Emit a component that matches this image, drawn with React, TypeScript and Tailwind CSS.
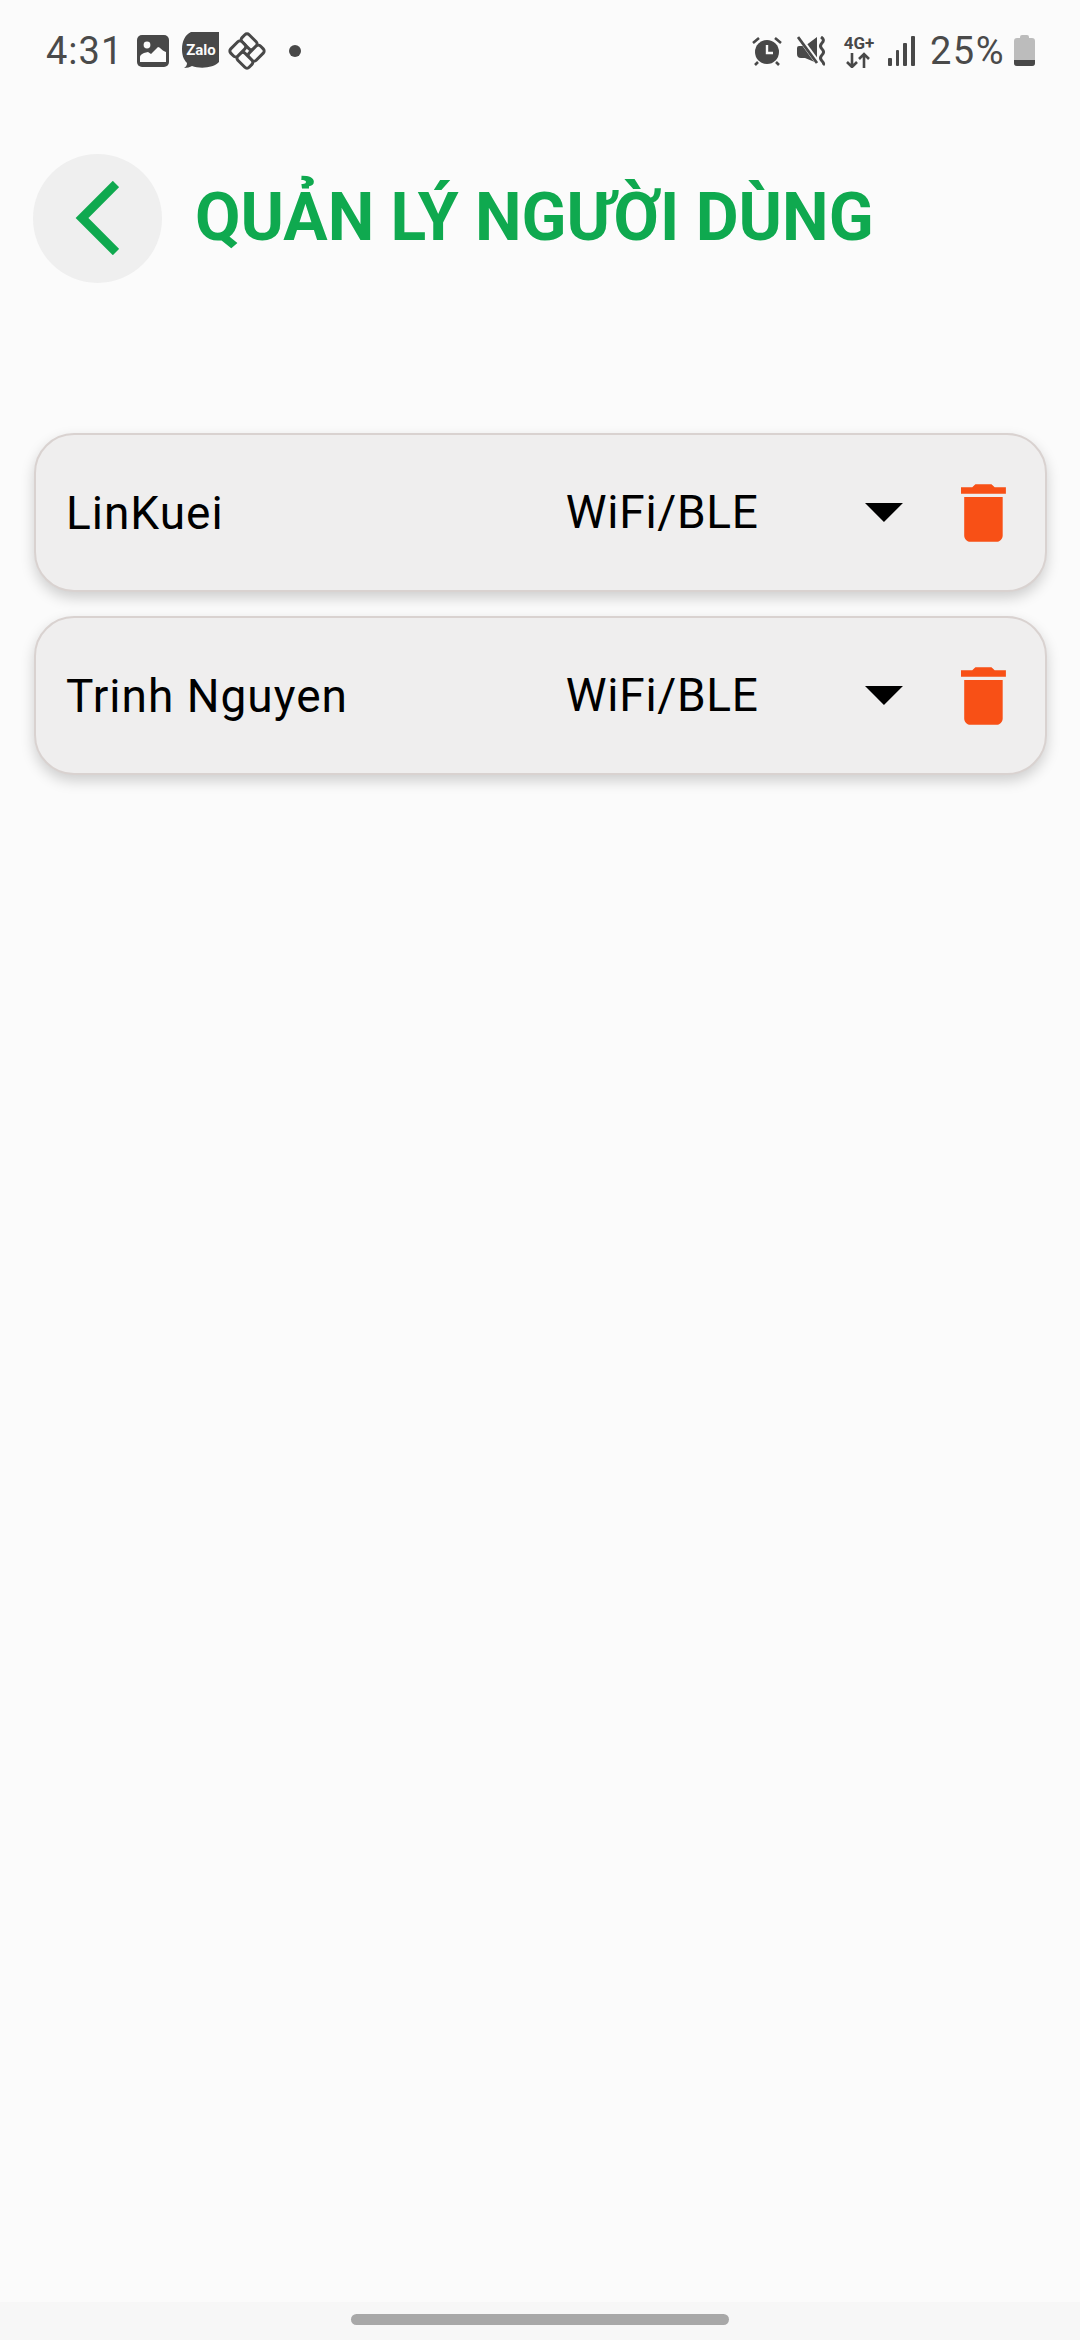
const users = ['LinKuei', 'Trinh Nguyen']

function StatusLeft() {
  return (
    <div className="flex items-center">
      <span className="text-[38px] leading-none text-[#4a4a4a] w-[91px] tracking-[1px]">4:31</span>
      <svg width="32" height="32" viewBox="0 0 32 32" className="mr-[13px]">
        <rect width="32" height="32" rx="5" fill="#484848" />
        <circle cx="10" cy="10" r="3.4" fill="#fbfbfb" />
        <path d="M3 27v-5c0-1 1-3 4-4l4-1 3 2 7-7c2 0 3 3 8 5v10z" fill="#fbfbfb" />
      </svg>
      <svg width="37" height="37" viewBox="0 0 37 37" className="mr-[9px]">
        <path d="M9 0h28v30c-5 6-19 7-27 4-2 1-5 2-8 2 2-1 3-3 3-5C1 27 0 22 0 17 0 9 3 3 9 0z" fill="#484848" />
        <text x="19" y="23" textAnchor="middle" fontSize="15" fontWeight="700" fill="#fbfbfb" fontFamily="Roboto, sans-serif">Zalo</text>
      </svg>
      <svg width="38" height="38" viewBox="-19 -19 38 38" className="mr-[23px]">
        <g transform="rotate(45)" fill="#fbfbfb" stroke="#484848" strokeWidth="3">
          <rect x="-13" y="-13" width="16" height="10" rx="3" />
          <rect x="3" y="-13" width="10" height="16" rx="3" />
          <rect x="-3" y="3" width="16" height="10" rx="3" />
          <rect x="-13" y="-3" width="10" height="16" rx="3" />
        </g>
      </svg>
      <div className="w-3 h-3 rounded-full bg-[#484848]" />
    </div>
  )
}

function StatusRight() {
  return (
    <div className="flex items-center">
      <svg width="30" height="30" viewBox="0 0 30 30" className="mr-[15px]">
        <circle cx="15" cy="16" r="12" fill="#484848" />
        <path d="M15 9v8h6" fill="none" stroke="#fbfbfb" strokeWidth="2.4" />
        <path d="M1 7l6-5M29 7l-6-5M6 26l-3 3M24 26l3 3" stroke="#484848" strokeWidth="2.6" />
      </svg>
      <svg width="30" height="30" viewBox="0 0 30 30" className="mr-[15px]">
        <path d="M0 12a2 2 0 0 1 2-2h6L20 1v26l-12-5H4a4 4 0 0 1-4-4z" fill="#484848" />
        <path d="M2 1l19 26" stroke="#fbfbfb" strokeWidth="5" />
        <path d="M1 1l19 26" stroke="#484848" strokeWidth="2.8" />
        <path d="M24 1c3 2 3 4 1 6s-2 4 0 6 2 4 0 6-2 4 0 6 2 3 1 4" fill="none" stroke="#484848" strokeWidth="3" />
      </svg>
      <svg width="34" height="34" viewBox="0 0 34 34" className="mr-[12px]">
        <text x="17" y="15" textAnchor="middle" fontSize="17" fontWeight="700" fill="#484848" fontFamily="Roboto, sans-serif">4G+</text>
        <path d="M10 19v14M5 28l5 5 5-5M22 34V20M17 25l5-5 5 5" fill="none" stroke="#484848" strokeWidth="2.6" />
      </svg>
      <svg width="27" height="30" viewBox="0 0 27 30" className="mr-[15px]">
        <rect x="0" y="22" width="4" height="8" rx="1" fill="#484848" />
        <rect x="8" y="14" width="3" height="16" rx="1" fill="#484848" />
        <rect x="15" y="7" width="4" height="23" rx="1" fill="#484848" />
        <rect x="23" y="0" width="4" height="30" rx="1" fill="#484848" />
      </svg>
      <span className="text-[38px] leading-none text-[#4a4a4a] w-[84px] tracking-[1.5px]">25%</span>
      <svg width="21" height="31" viewBox="0 0 21 31">
        <path d="M6 3V2a2 2 0 0 1 2-2h5a2 2 0 0 1 2 2v1h3a3 3 0 0 1 3 3v22a3 3 0 0 1-3 3H3a3 3 0 0 1-3-3V6a3 3 0 0 1 3-3z" fill="#bcbcbc" />
        <path d="M0 25h21v3a3 3 0 0 1-3 3H3a3 3 0 0 1-3-3z" fill="#484848" />
      </svg>
    </div>
  )
}

function UserRow({ name }: { name: string }) {
  return (
    <div className="flex items-center h-[159px] pl-[30px] pr-[39px] rounded-[40px] bg-[#efeeee] border-2 border-[#d9d2d0] shadow-[0_6px_14px_rgba(0,0,0,0.18)]">
      <span className="w-[501px] text-[46px] leading-none tracking-[1px] text-black">{name}</span>
      <span className="w-[300px] pb-[2px] text-[46px] leading-none tracking-[0.7px] text-black">WiFi/BLE</span>
      <svg width="38" height="19" viewBox="0 0 38 19" className="mr-[58px]">
        <path d="M0 0h38L19 19z" fill="#000" />
      </svg>
      <svg width="45" height="58" viewBox="5 3 14 18">
        <path d="M6 19c0 1.1.9 2 2 2h8c1.1 0 2-.9 2-2V7H6v12zM19 4h-3.5l-1-1h-5l-1 1H5v2h14V4z" fill="#f85016" />
      </svg>
    </div>
  )
}

export default function App() {
  return (
    <div className="flex flex-col w-[1080px] h-[2340px] bg-[#fbfbfb] font-['Roboto',sans-serif]">
      <div className="flex items-center justify-between h-[101px] pl-[46px] pr-[45px]">
        <StatusLeft />
        <StatusRight />
      </div>

      <div className="flex items-center mt-[53px] pl-[33px]">
        <button className="flex items-center justify-center w-[129px] h-[129px] rounded-full bg-[#efefef]">
          <svg width="44" height="74" viewBox="0 0 44 74" className="mr-[2px] mb-[2px]">
            <path d="M41 3 7 37l34 34" fill="none" stroke="#0fa94f" strokeWidth="9" />
          </svg>
        </button>
        <h1 className="ml-[33px] mb-[2px] text-[66px] leading-none font-bold text-[#0fa94f]">QUẢN LÝ NGƯỜI DÙNG</h1>
      </div>

      <div className="flex flex-col gap-[24px] mt-[150px] ml-[34px] w-[1013px]">
        {users.map((u) => (
          <UserRow key={u} name={u} />
        ))}
      </div>

      <div className="flex flex-1 items-end">
        <div className="flex justify-center w-full h-[38px] bg-[#f7f7f7] pt-[12px]">
          <div className="w-[378px] h-[11px] rounded-full bg-[#a8a8a8]" />
        </div>
      </div>
    </div>
  )
}
